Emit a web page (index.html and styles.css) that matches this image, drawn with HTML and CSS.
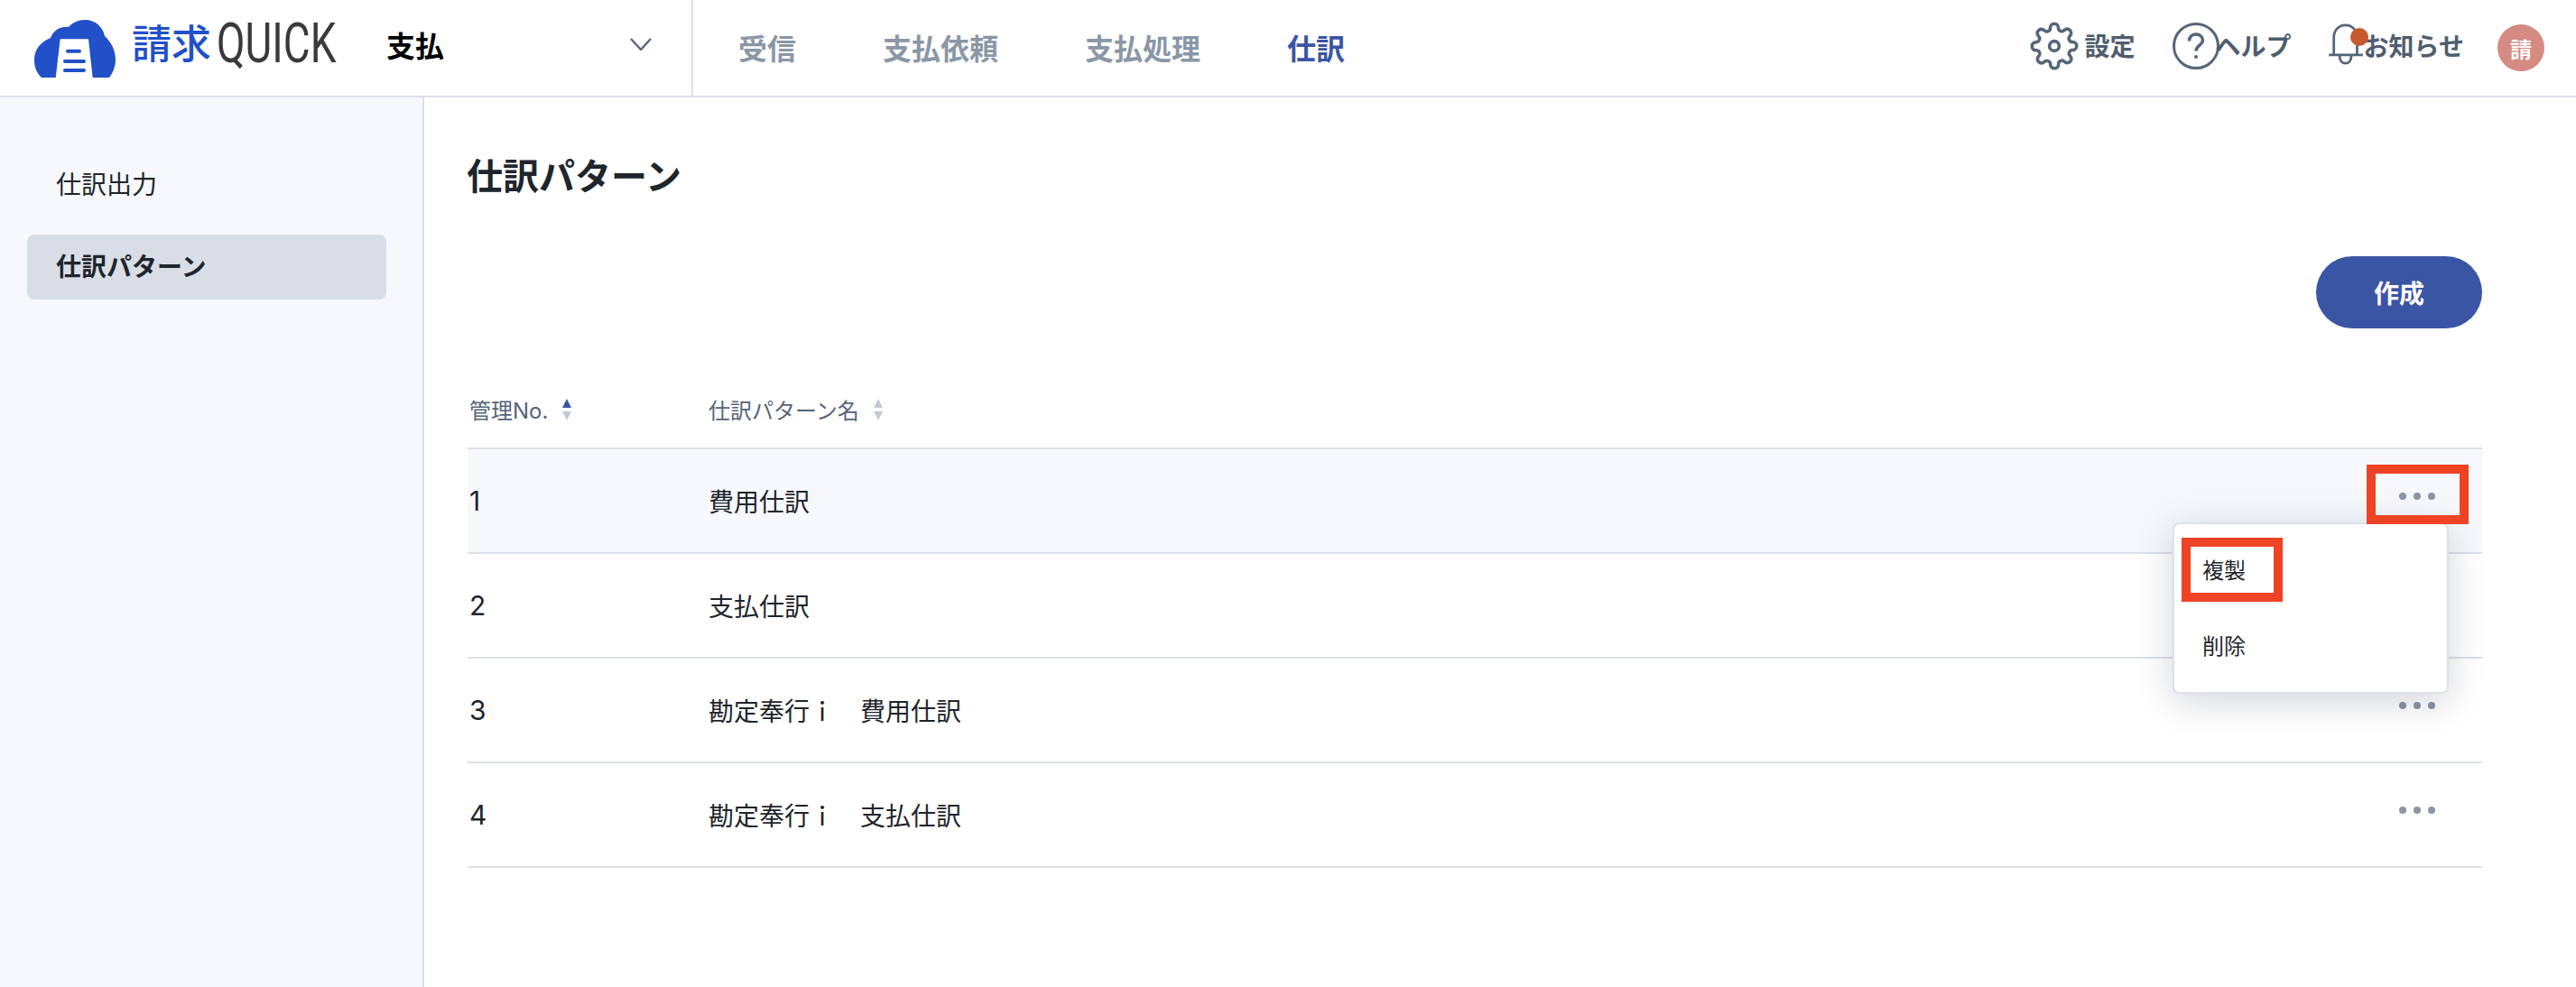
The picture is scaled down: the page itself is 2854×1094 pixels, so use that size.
FILE: index.html
```html
<!DOCTYPE html>
<html lang="ja">
<head>
    <meta charset="UTF-8">
    <title>仕訳パターン | 請求QUICK</title>
    <link rel="stylesheet" href="styles.css">
</head>
<body>
    <header class="topbar">
        <div class="brand-area">
            <a class="logo">
                <svg class="logo-mark" viewBox="0 0 90 64" width="90" height="64">
                    <path fill="#2150c8" d="M8 64C2 58 0 52 0 44C0 32 8 24 18 20C22 10 31 7 38 8C42 3 49 0 56 0C68 0 76 8 78 18C85 24 90 34 90 44C90 52 87 59 83 64Z"/>
                    <path fill="#fff" d="M28.7 21.3H60L64.7 64H23.7Z"/>
                    <path fill="none" stroke="#2150c8" stroke-width="4" stroke-linecap="round" d="M37 34.7H50M34 46H55M34 56H55"/>
                </svg>
                <span class="logo-ja">請求</span>
                <span class="logo-en">QUICK</span>
            </a>
            <div class="mode-select">
                <span>支払</span>
                <svg viewBox="0 0 24 14" width="24" height="14"><path fill="none" stroke="#56667a" stroke-width="2.4" d="M1 1L12 13L23 1"/></svg>
            </div>
        </div>
        <nav class="main-nav">
            <a>受信</a>
            <a>支払依頼</a>
            <a>支払処理</a>
            <a class="current">仕訳</a>
        </nav>
        <div class="tools">
            <a class="tool tool-settings">
                <svg viewBox="0 0 24 24" width="54" height="54" fill="none" stroke="#56667a" stroke-width="1.6">
                    <circle cx="12" cy="12" r="2.4"/>
                    <path d="M19.4 15a1.65 1.65 0 0 0 .33 1.82l.06.06a2 2 0 0 1 0 2.83 2 2 0 0 1-2.83 0l-.06-.06a1.65 1.65 0 0 0-1.82-.33 1.65 1.65 0 0 0-1 1.51V21a2 2 0 0 1-2 2 2 2 0 0 1-2-2v-.09A1.65 1.65 0 0 0 9 19.4a1.65 1.65 0 0 0-1.82.33l-.06.06a2 2 0 0 1-2.83 0 2 2 0 0 1 0-2.83l.06-.06a1.65 1.65 0 0 0 .33-1.82 1.65 1.65 0 0 0-1.51-1H3a2 2 0 0 1-2-2 2 2 0 0 1 2-2h.09A1.65 1.65 0 0 0 4.6 9a1.65 1.65 0 0 0-.33-1.82l-.06-.06a2 2 0 0 1 0-2.83 2 2 0 0 1 2.83 0l.06.06a1.65 1.65 0 0 0 1.82.33H9a1.65 1.65 0 0 0 1-1.51V3a2 2 0 0 1 2-2 2 2 0 0 1 2 2v.09a1.65 1.65 0 0 0 1 1.51 1.65 1.65 0 0 0 1.82-.33l.06-.06a2 2 0 0 1 2.83 0 2 2 0 0 1 0 2.83l-.06.06a1.65 1.65 0 0 0-.33 1.82V9a1.65 1.65 0 0 0 1.51 1H21a2 2 0 0 1 2 2 2 2 0 0 1-2 2h-.09a1.65 1.65 0 0 0-1.51 1z"/>
                </svg>
                <span class="tool-label">設定</span>
            </a>
            <a class="tool tool-help">
                <svg viewBox="0 0 52 52" width="52" height="52" fill="none" stroke="#56667a" stroke-width="3">
                    <circle cx="26" cy="26" r="24.5"/>
                    <path stroke-width="3.5" d="M18.5 20.5C18.5 15.5 22 13 26 13C30.5 13 33.5 16 33.5 19.5C33.5 25 26 25.5 26 31.5"/>
                    <circle cx="26" cy="38" r="2" fill="#56667a" stroke="none"/>
                </svg>
                <span class="tool-label">ヘルプ</span>
            </a>
            <a class="tool tool-notice">
                <svg viewBox="0 0 42 50" width="39" height="46" fill="none" stroke="#56667a" stroke-width="3">
                    <path d="M6 37V17C6 8 12 2 20 2C28 2 34 8 34 17V37"/>
                    <path d="M0 38H41"/>
                    <path d="M13 39C13 45 16 48 20 48C24 48 27 45 27 39"/>
                </svg>
                <span class="badge-dot"></span>
                <span class="tool-label">お知らせ</span>
            </a>
            <span class="avatar">請</span>
        </div>
    </header>

    <div class="page">
        <aside class="sidebar">
            <a class="side-link">仕訳出力</a>
            <a class="side-link active">仕訳パターン</a>
        </aside>

        <main class="content">
            <h1>仕訳パターン</h1>
            <div class="actions">
                <button class="btn-create">作成</button>
            </div>

            <div class="table-wrap">
                <div class="row row-head">
                    <div class="col-no">管理No.
                        <svg class="sort" viewBox="0 0 10 24" width="10" height="24">
                            <path fill="#3b55a5" d="M5 0L10 10H0Z"/>
                            <path fill="#c3cad4" d="M0 14H10L5 24Z"/>
                        </svg>
                    </div>
                    <div class="col-name">仕訳パターン名
                        <svg class="sort" viewBox="0 0 10 24" width="10" height="24">
                            <path fill="#c3cad4" d="M5 0L10 10H0Z"/>
                            <path fill="#c3cad4" d="M0 14H10L5 24Z"/>
                        </svg>
                    </div>
                </div>
                <div class="row hover">
                    <div class="col-no">1</div>
                    <div class="col-name">費用仕訳</div>
                    <div class="col-more"><span class="dots"><i></i><i></i><i></i></span></div>
                </div>
                <div class="row">
                    <div class="col-no">2</div>
                    <div class="col-name">支払仕訳</div>
                    <div class="col-more"><span class="dots"><i></i><i></i><i></i></span></div>
                </div>
                <div class="row">
                    <div class="col-no">3</div>
                    <div class="col-name">勘定奉行ｉ　費用仕訳</div>
                    <div class="col-more"><span class="dots"><i></i><i></i><i></i></span></div>
                </div>
                <div class="row">
                    <div class="col-no">4</div>
                    <div class="col-name">勘定奉行ｉ　支払仕訳</div>
                    <div class="col-more"><span class="dots"><i></i><i></i><i></i></span></div>
                </div>

                <!-- popup menu opened from the first row -->
                <div class="menu">
                    <a>複製</a>
                    <a>削除</a>
                </div>
                <span class="mark mark-more"></span>
                <span class="mark mark-copy"></span>
            </div>
        </main>
    </div>
</body>
</html>
```

FILE: styles.css
```css
* {
    box-sizing: border-box;
}

html, body {
    height: 100%;
}

body {
    margin: 0;
    overflow: hidden;
    background-color: #fff;
    color: #1e252c;
    font-family: "Inter", "Noto Sans CJK JP", sans-serif;
}

/* top bar */
.topbar {
    display: flex;
    height: 108px;
    border-bottom: 2px solid #dde1e8;
}

.brand-area {
    display: flex;
    align-items: flex-start;
    width: 768px;
    padding-left: 38px;
    border-right: 2px solid #dde1e8;
}

.logo {
    display: flex;
    width: 390px;
    height: 106px;
}

.logo-mark {
    margin-top: 22px;
    flex: none;
}

.logo-ja {
    margin: 18px 0 0 18px;
    font-size: 44px;
    line-height: 62px;
    font-weight: 500;
    color: #2150c8;
}

.logo-en {
    margin: 8px 0 0 6px;
    font-family: "Roboto", sans-serif;
    font-size: 62px;
    line-height: 80px;
    font-weight: 400;
    color: #3a3a3c;
    transform: scaleX(0.74);
    transform-origin: left center;
}

.mode-select {
    display: flex;
    align-items: center;
    justify-content: space-between;
    width: 294px;
    height: 98px;
    font-size: 32px;
    font-weight: 700;
    color: #000;
}

.main-nav {
    display: flex;
    align-items: center;
    gap: 96px;
    padding: 0 0 0 50px;
    height: 104px;
    font-size: 32px;
    font-weight: 700;
    color: #8a97a6;
}

.main-nav .current {
    color: #3b55a5;
}

.tools {
    display: flex;
    align-items: center;
    margin-left: auto;
    padding-right: 35px;
    height: 102px;
    font-size: 28px;
    font-weight: 700;
    color: #505d6e;
}

.tool {
    position: relative;
    display: flex;
    align-items: center;
}

.tool-label {
    padding-bottom: 2px;
}

.tool-settings .tool-label {
    margin-left: 7px;
}

.tool-help {
    margin-left: 41px;
}

.tool-help svg {
    margin-right: -4px;
}

.tool-notice {
    margin-left: 41px;
}

.tool-notice svg {
    margin-top: -4px;
}

.badge-dot {
    position: absolute;
    left: 24px;
    top: 1px;
    width: 20px;
    height: 20px;
    border-radius: 50%;
    background-color: #c65a2e;
}

.avatar {
    display: flex;
    align-items: center;
    justify-content: center;
    width: 52px;
    height: 52px;
    margin-left: 37px;
    margin-top: 4px;
    border-radius: 50%;
    background-color: #d58a82;
    color: #fff;
    font-size: 24px;
}

/* page body */
.page {
    display: flex;
    height: calc(100% - 108px);
}

.sidebar {
    width: 470px;
    padding: 61px 40px 0 30px;
    background-color: #f6f8fc;
    border-right: 2px solid #dde1e8;
}

.side-link {
    display: flex;
    align-items: center;
    height: 72px;
    margin-bottom: 19px;
    padding: 0 0 4px 32px;
    border-radius: 8px;
    font-size: 28px;
}

.side-link.active {
    background-color: #d9dee6;
    font-weight: 700;
}

.content {
    flex: 1;
    padding: 60px 104px 0 48px;
}

h1 {
    margin: 0 0 0 -1px;
    font-size: 40px;
    line-height: 56px;
    font-weight: 700;
}

.actions {
    display: flex;
    justify-content: flex-end;
    margin-top: 60px;
}

.btn-create {
    width: 184px;
    height: 80px;
    border: 0;
    border-radius: 40px;
    background-color: #3b55a5;
    color: #fff;
    font-family: inherit;
    font-size: 28px;
    font-weight: 700;
}

/* table */
.table-wrap {
    position: relative;
    margin-top: 46px;
}

.row {
    display: flex;
    align-items: center;
    height: 116px;
    border-bottom: 2px solid #dde1e8;
    font-size: 28px;
}

.row.hover {
    background-color: #f6f8fc;
}

.row-head {
    height: 88px;
    font-size: 24px;
    color: #566578;
}

.col-no {
    width: 267px;
    padding-left: 2px;
    font-size: 30px;
}

.row-head .col-no {
    font-size: 24px;
}

.col-name {
    flex: 1;
}

.sort {
    margin-left: 9px;
    vertical-align: -2px;
}

.col-more {
    padding: 0 52px 10px 0;
}

.dots {
    display: flex;
    gap: 8px;
}

.dots i {
    width: 8px;
    height: 8px;
    border-radius: 50%;
    background-color: #8a95a5;
}

.menu {
    position: absolute;
    left: 1889px;
    top: 169px;
    width: 306px;
    height: 190px;
    padding: 9px 0;
    background-color: #fff;
    border: 2px solid #dde1e8;
    border-radius: 8px;
    box-shadow: 0 8px 40px rgba(30, 40, 60, 0.2);
    font-size: 24px;
}

.menu a {
    display: flex;
    align-items: center;
    height: 84px;
    padding: 0 0 4px 31px;
}

/* red annotation boxes */
.mark {
    position: absolute;
    border: 10px solid #ee4325;
}

.mark-more {
    left: 2104px;
    top: 105px;
    width: 113px;
    height: 66px;
}

.mark-copy {
    left: 1899px;
    top: 186px;
    width: 112px;
    height: 71px;
}
```
